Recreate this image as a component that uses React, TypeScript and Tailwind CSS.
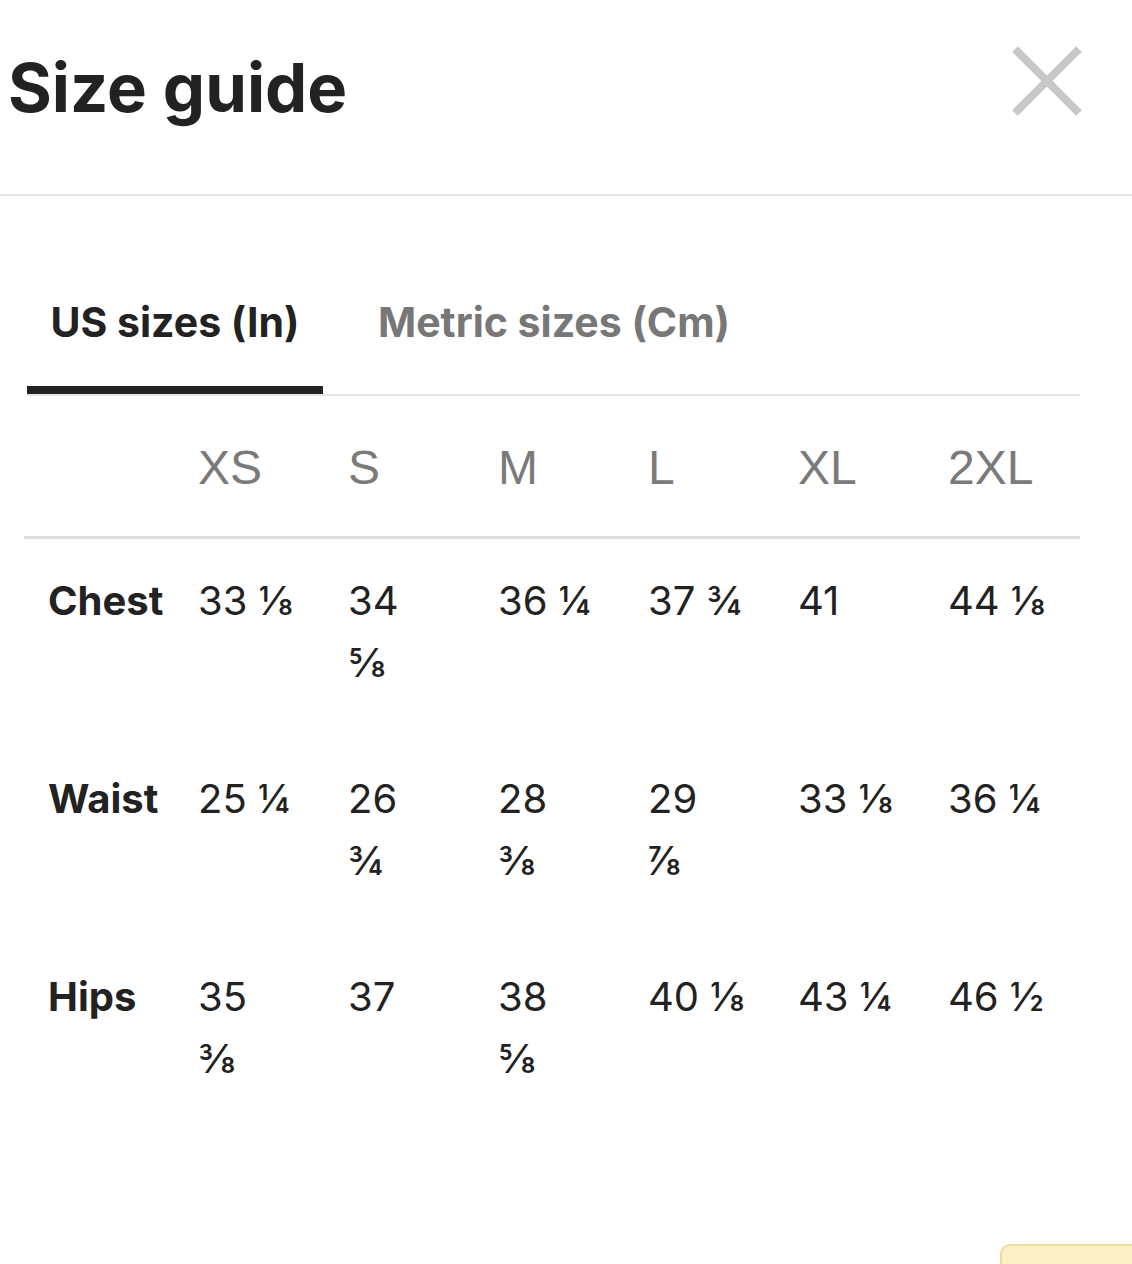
import React from "react";

const inter = { fontFamily: "Inter, Lato, 'Noto Sans', sans-serif" };
const arial = { fontFamily: "'Liberation Sans', Arial, sans-serif" };

type Cell = [string, string?];
const rows: { label: string; cells: Cell[] }[] = [
  {
    label: "Chest",
    cells: [["33 ⅛"], ["34", "⅝"], ["36 ¼"], ["37 ¾"], ["41"], ["44 ⅛"]],
  },
  {
    label: "Waist",
    cells: [["25 ¼"], ["26", "¾"], ["28", "⅜"], ["29", "⅞"], ["33 ⅛"], ["36 ¼"]],
  },
  {
    label: "Hips",
    cells: [["35", "⅜"], ["37"], ["38", "⅝"], ["40 ⅛"], ["43 ¼"], ["46 ½"]],
  },
];

const sizes = ["XS", "S", "M", "L", "XL", "2XL"];

export default function App() {
  return (
    <div className="relative w-[1132px] h-[1264px] bg-white overflow-hidden">
      {/* Header */}
      <div className="h-[194px] flex items-start justify-between">
        <h1
          className="ml-[8px] mt-[46px] text-[67px] font-bold leading-[84px] text-[#222222]"
          style={inter}
        >
          Size guide
        </h1>
        <button className="mt-[46px] mr-[50px] w-[70px] h-[70px]" aria-label="Close">
          <svg width="70" height="70" viewBox="0 0 70 70">
            <line x1="3" y1="3" x2="67" y2="67" stroke="#c8c8c8" strokeWidth="8" />
            <line x1="67" y1="3" x2="3" y2="67" stroke="#c8c8c8" strokeWidth="8" />
          </svg>
        </button>
      </div>
      <div className="h-[2px] bg-[#e6e6e6]" />

      {/* Tabs */}
      <div className="ml-[27px] w-[1053px] flex border-b-2 border-[#e6e6e6]">
        <div className="w-[296px] flex flex-col items-center">
          <div
            className="pt-[103px] text-[41px] font-bold leading-[46px] text-[#222222] whitespace-nowrap"
            style={inter}
          >
            US sizes (In)
          </div>
          <div className="mt-[41px] h-[8px] w-full bg-[#222222]" />
        </div>
        <div
          className="ml-[55px] pt-[103px] text-[41px] font-bold leading-[46px] text-[#777777] whitespace-nowrap"
          style={inter}
        >
          Metric sizes (Cm)
        </div>
      </div>

      {/* Size header */}
      <div className="ml-[24px] w-[1056px] border-b-[3px] border-[#dddddd]">
        <div className="pl-[24px] pt-[44px] pb-[40px] grid grid-cols-[150px_repeat(6,150px)]">
          <div />
          {sizes.map((s) => (
            <div key={s} className="text-[48px] leading-[56px] text-[#7a7a7a]" style={arial}>
              {s}
            </div>
          ))}
        </div>
      </div>

      {/* Rows */}
      <div className="ml-[48px] pt-[31px]">
        {rows.map((r) => (
          <div key={r.label} className="h-[198px] grid grid-cols-[150px_repeat(6,150px)]">
            <div className="text-[40px] font-bold leading-[62px] text-[#222222]" style={inter}>
              {r.label}
            </div>
            {r.cells.map((c, i) => (
              <div key={i} className="text-[40px] leading-[62px] text-[#222222]" style={inter}>
                <div>{c[0]}</div>
                {c[1] && <div>{c[1]}</div>}
              </div>
            ))}
          </div>
        ))}
      </div>

      {/* Bottom-right overlay */}
      <div className="absolute left-[1000px] top-[1244px] w-[140px] h-[40px] rounded-tl-[10px] bg-[#fdf0c4] border-l-2 border-t-2 border-[#eddc9c]" />
    </div>
  );
}
